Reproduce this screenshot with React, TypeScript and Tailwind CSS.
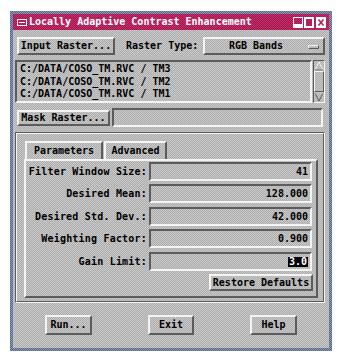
import React from "react";

const G =
  "bg-[image:repeating-conic-gradient(#c9c9c9_0_25%,#adadad_0_50%)] bg-[length:2px_2px]";
const RAISED =
  "border-2 border-t-[#f4f4f4] border-l-[#f4f4f4] border-r-[#5c5c5c] border-b-[#5c5c5c]";
const SUNKEN =
  "border-2 border-t-[#5c5c5c] border-l-[#5c5c5c] border-r-[#f4f4f4] border-b-[#f4f4f4]";
const MONO = "[font-family:'DejaVu_Sans_Mono','Liberation_Mono',monospace] font-bold text-[10px] leading-[10px]";

function Field({ value, selected }: { value: string; selected?: boolean }) {
  return (
    <div className={`${SUNKEN} ${G} ml-[2px] w-[163px] h-[19px] flex items-center justify-end pr-[2px]`}>
      {selected ? (
        <span className="bg-black text-white px-[1px] leading-[10px]">{value}</span>
      ) : (
        <span>{value}</span>
      )}
    </div>
  );
}

function Row({ label, value, mt, selected }: { label: string; value: string; mt: string; selected?: boolean }) {
  return (
    <div className={`flex items-center h-[19px] ${mt}`}>
      <div className="w-[121px] text-right whitespace-nowrap tracking-[0.2px]">{label}</div>
      <Field value={value} selected={selected} />
    </div>
  );
}

export default function App() {
  return (
    <div className={`w-[340px] h-[360px] bg-white pt-[11px] pl-[10px] text-black ${MONO}`}>
      <div className="w-[322px] h-[340px] p-[3px] flex flex-col bg-[image:repeating-conic-gradient(#8a98b8_0_25%,#5a6888_0_50%)] bg-[length:2px_2px]">
        {/* title bar */}
        <div className="h-[16px] flex items-center pl-[4px] pr-[3px] bg-[image:repeating-conic-gradient(#c8306c_0_25%,#a0164e_0_50%)] bg-[length:2px_2px]">
          <svg width="10" height="7" viewBox="0 0 10 7" className="shrink-0">
            <rect x="0.5" y="0.5" width="9" height="6" fill="none" stroke="#fff" />
            <rect x="2" y="3" width="6" height="1" fill="#fff" />
          </svg>
          <span className="ml-[2px] text-white whitespace-nowrap">Locally Adaptive Contrast Enhancement</span>
          <div className="ml-auto flex items-center gap-[1px]">
            <svg width="10" height="11" viewBox="0 0 10 11">
              <rect x="0.5" y="0.5" width="9" height="10" fill="none" stroke="#fff" />
              <rect x="1" y="7" width="8" height="3" fill="#fff" />
            </svg>
            <svg width="10" height="11" viewBox="0 0 10 11">
              <rect x="0" y="0" width="10" height="11" fill="#fff" />
              <rect x="2" y="2" width="6" height="7" fill="#b0225c" />
            </svg>
            <svg width="10" height="11" viewBox="0 0 10 11" className="ml-[1px]">
              <rect x="0" y="0" width="10" height="11" fill="#fff" />
              <path d="M2.5 2.5 L7.5 8.5 M7.5 2.5 L2.5 8.5" stroke="#b0225c" strokeWidth="1.6" />
            </svg>
          </div>
        </div>

        {/* body */}
        <div className={`flex-1 flex flex-col pl-[2px] pr-[4px] pt-[7px] ${G}`}>
          {/* row 1 */}
          <div className="flex items-center h-[18px]">
            <div className={`${RAISED} ${G} ml-[2px] w-[98px] h-[18px] flex items-center justify-center whitespace-nowrap`}>
              Input Raster...
            </div>
            <span className="ml-[11px] whitespace-nowrap">Raster Type:</span>
            <div className={`${RAISED} ${G} ml-auto w-[122px] h-[18px] flex items-center relative`}>
              <span className="w-[100px] text-center pl-[2px]">RGB Bands</span>
              <div className={`absolute right-[4px] top-[6px] w-[11px] h-[4px] border border-t-[#f4f4f4] border-l-[#f4f4f4] border-r-[#5c5c5c] border-b-[#5c5c5c] ${G}`} />
            </div>
          </div>

          {/* list */}
          <div className="flex mt-[5px] h-[43px]">
            <div className={`${SUNKEN} ${G} flex-1 pl-[3px] pt-[1px] flex flex-col whitespace-nowrap`}>
              <div className="h-[12px] flex items-center">C:/DATA/COSO_TM.RVC / TM3</div>
              <div className="h-[13px] flex items-center">C:/DATA/COSO_TM.RVC / TM2</div>
              <div className="h-[12px] flex items-center">C:/DATA/COSO_TM.RVC / TM1</div>
            </div>
            <div className={`ml-[1px] w-[12px] border border-t-[#5c5c5c] border-l-[#5c5c5c] border-r-[#f4f4f4] border-b-[#f4f4f4] ${G} flex flex-col items-center`}>
              <svg width="10" height="10" viewBox="0 0 10 10">
                <path d="M5 1 L9 9 L1 9 Z" fill="none" stroke="#f4f4f4" strokeWidth="1" />
                <path d="M9 9 L1 9" stroke="#5c5c5c" strokeWidth="1" />
              </svg>
              <div className={`flex-1 w-[10px] border border-t-[#f4f4f4] border-l-[#f4f4f4] border-r-[#5c5c5c] border-b-[#5c5c5c] ${G}`} />
              <svg width="10" height="10" viewBox="0 0 10 10">
                <path d="M1 1 L9 1 L5 9 Z" fill="none" stroke="#5c5c5c" strokeWidth="1" />
                <path d="M1 1 L9 1" stroke="#f4f4f4" strokeWidth="1" />
              </svg>
            </div>
          </div>

          {/* mask row */}
          <div className="flex items-center mt-[5px] h-[19px]">
            <div className={`${RAISED} ${G} ml-[2px] w-[93px] h-[16px] flex items-center justify-center whitespace-nowrap`}>
              Mask Raster...
            </div>
            <div className={`${SUNKEN} ${G} ml-[2px] flex-1 h-[19px] mr-[2px]`} />
          </div>

          {/* tab frame */}
          <div className="mt-[5px] h-[171px] border border-t-[#5c5c5c] border-l-[#5c5c5c] border-r-[#f4f4f4] border-b-[#f4f4f4]">
            <div className="h-full border border-t-[#f4f4f4] border-l-[#f4f4f4] border-r-[#5c5c5c] border-b-[#5c5c5c] pt-[7px] pl-[7px] pr-[5px] pb-[3px] flex flex-col">
              <div className="flex h-[18px] ml-[1px]">
                <div className={`w-[78px] h-[18px] border-2 border-b-0 border-t-[#f4f4f4] border-l-[#f4f4f4] border-r-[#5c5c5c] ${G} flex items-center justify-center`}>
                  Parameters
                </div>
                <div className={`ml-[1px] w-[63px] h-[18px] border-2 border-b-0 border-t-[#f4f4f4] border-l-[#f4f4f4] border-r-[#5c5c5c] ${G} flex items-center justify-center`}>
                  Advanced
                </div>
              </div>
              <div className={`${RAISED} ${G} flex-1 flex flex-col pr-[3px]`}>
                <Row label="Filter Window Size:" value="41" mt="mt-[1px]" />
                <Row label="Desired Mean:" value="128.000" mt="mt-[3px]" />
                <Row label="Desired Std. Dev.:" value="42.000" mt="mt-[4px]" />
                <Row label="Weighting Factor:" value="0.900" mt="mt-[3px]" />
                <Row label="Gain Limit:" value="3.0" mt="mt-[4px]" selected />
                <div className={`${RAISED} ${G} self-end mt-[3px] w-[104px] h-[17px] flex items-center justify-center whitespace-nowrap`}>
                  Restore Defaults
                </div>
              </div>
            </div>
          </div>

          {/* bottom buttons */}
          <div className="flex mt-[12px] h-[20px] pl-[30px] gap-[56px]">
            <div className={`${RAISED} ${G} w-[47px] h-[20px] flex items-center justify-center`}>Run...</div>
            <div className={`${RAISED} ${G} w-[46px] h-[20px] flex items-center justify-center`}>Exit</div>
            <div className={`${RAISED} ${G} w-[47px] h-[20px] flex items-center justify-center`}>Help</div>
          </div>
        </div>
      </div>
    </div>
  );
}
